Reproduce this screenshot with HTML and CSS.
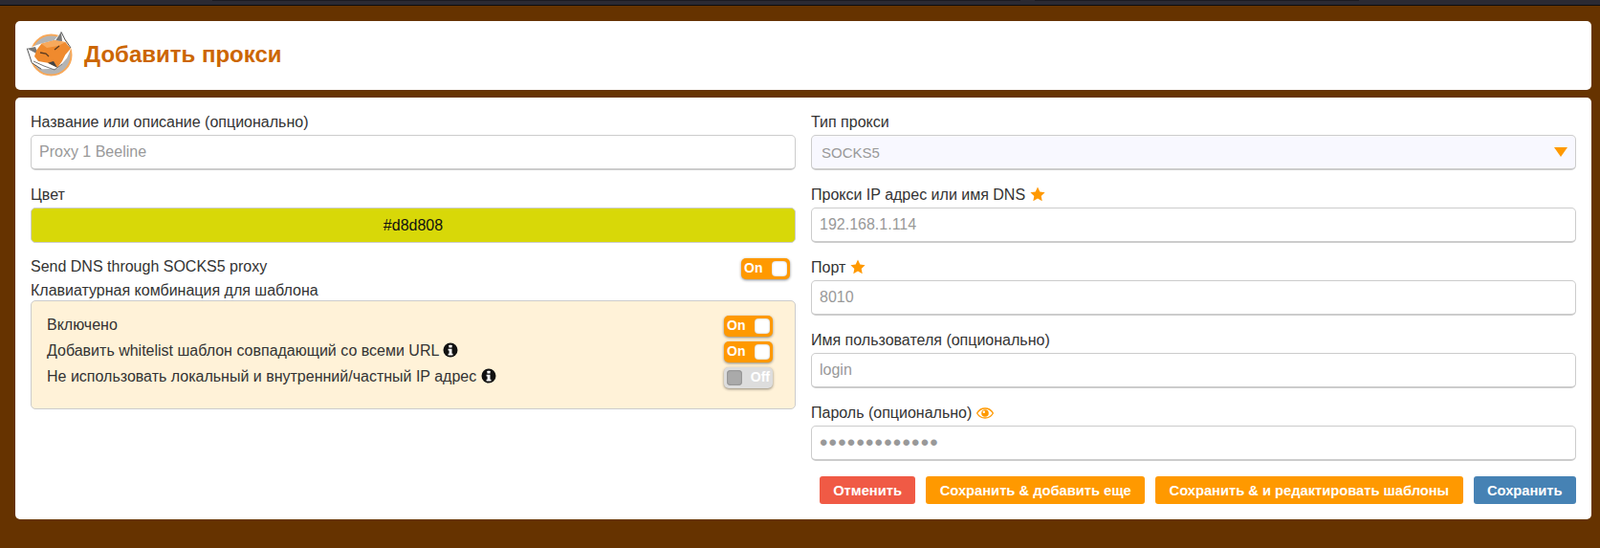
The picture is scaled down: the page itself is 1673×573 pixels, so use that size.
FILE: index.html
```html
<!DOCTYPE html>
<html lang="ru">
<head>
    <meta charset="UTF-8">
    <title>Добавить прокси</title>
    <link rel="stylesheet" href="styles.css">
</head>
<body>
    <div class="browser-bar">
        <div class="browser-tab tab-wide"></div>
        <div class="browser-tab tab-narrow"></div>
    </div>
    <div class="page">
        <header class="card header-card">
            <svg class="logo" width="52" height="52" viewBox="0 0 52 52">
                <circle cx="26.500" cy="26.500" r="21" fill="#b4b4b4" stroke="#f9a857" stroke-width="2"/>
                <path d="M1.300 19.700 L16 14.500 L29.700 11.300 L37 2.300 L41.300 11 L48 18 L43 29.700 L33 40.700 L16.300 41.300 L6.300 34.700 Z" fill="#fff"/>
                <path d="M37 2.300 L41.300 11 L47 19 M1.300 19.700 L6.300 34.700 L16.300 41.300" fill="none" stroke="#555" stroke-width="1"/>
                <path d="M1.300 19.700 L10 18 L13 26 Z M37 2.300 L31 11.500 L38 12 Z" fill="#777"/>
                <path d="M16.300 14.700 L29.700 11.300 L41.300 13 L47 19.700 L41.300 26.300 L38 33 L33 39.700 L23 34.700 L13 33 L9 28 L11.300 21.300 Z" fill="#ef8a2e"/>
                <path d="M16.300 14.700 L29.700 11.300 L41.300 13 L34 17 L22 19 Z" fill="#f7a95c"/>
                <path d="M15 24 L21 25 L24 28 M30 21 L35 17" fill="none" stroke="#5a3a20" stroke-width="1.300"/>
                <path d="M23 34.700 L33 39.700 L29 33 Z" fill="#444"/>
                <path d="M8 33 L19 38 L30 42 L38 36" fill="none" stroke="#777" stroke-width="1"/>
            </svg>
            <h1 class="title">Добавить прокси</h1>
        </header>
        <main class="card form-card">
            <div class="column">
                <div class="field">
                    <label class="field-label">Название или описание (опционально)</label>
                    <input class="text-input" type="text" placeholder="Proxy 1 Beeline">
                </div>
                <div class="field">
                    <label class="field-label">Цвет</label>
                    <div class="color-box">#d8d808</div>
                </div>
                <div class="switch-row dns-row">
                    <span>Send DNS through SOCKS5 proxy</span>
                    <span class="toggle toggle-on"><b>On</b><i></i></span>
                </div>
                <div class="pattern-label">Клавиатурная комбинация для шаблона</div>
                <div class="pattern-box">
                    <div class="switch-row">
                        <span>Включено</span>
                        <span class="toggle toggle-on"><b>On</b><i></i></span>
                    </div>
                    <div class="switch-row">
                        <span>Добавить whitelist шаблон совпадающий со всеми URL
                            <svg class="icon" width="16" height="16" viewBox="0 0 16 16"><circle cx="8" cy="8" r="7.500" fill="#111"/><rect x="6.400" y="2.800" width="3.200" height="2.800" rx=".5" fill="#fff"/><path d="M5.600 6.800h3.900v5h1v1.600H5.600v-1.600h1v-3.400h-1z" fill="#fff"/></svg>
                        </span>
                        <span class="toggle toggle-on"><b>On</b><i></i></span>
                    </div>
                    <div class="switch-row">
                        <span>Не использовать локальный и внутренний/частный IP адрес
                            <svg class="icon" width="16" height="16" viewBox="0 0 16 16"><circle cx="8" cy="8" r="7.500" fill="#111"/><rect x="6.400" y="2.800" width="3.200" height="2.800" rx=".5" fill="#fff"/><path d="M5.600 6.800h3.900v5h1v1.600H5.600v-1.600h1v-3.400h-1z" fill="#fff"/></svg>
                        </span>
                        <span class="toggle toggle-off"><i></i><b>Off</b></span>
                    </div>
                </div>
            </div>
            <div class="column">
                <div class="field">
                    <label class="field-label">Тип прокси</label>
                    <div class="select-wrap">
                        <select class="select-input"><option>SOCKS5</option></select>
                    </div>
                </div>
                <div class="field">
                    <label class="field-label">Прокси IP адрес или имя DNS
                        <svg class="icon" width="16" height="16" viewBox="0 0 16 16"><path d="M8 .6l2.300 4.900 5.300.7-3.900 3.700 1 5.300L8 12.600l-4.700 2.600 1-5.300L.4 6.200l5.300-.7z" fill="#f90"/></svg>
                    </label>
                    <input class="text-input" type="text" placeholder="192.168.1.114">
                </div>
                <div class="field">
                    <label class="field-label">Порт
                        <svg class="icon" width="16" height="16" viewBox="0 0 16 16"><path d="M8 .6l2.300 4.900 5.300.7-3.900 3.700 1 5.300L8 12.600l-4.700 2.600 1-5.300L.4 6.200l5.300-.7z" fill="#f90"/></svg>
                    </label>
                    <input class="text-input" type="text" placeholder="8010">
                </div>
                <div class="field">
                    <label class="field-label">Имя пользователя (опционально)</label>
                    <input class="text-input" type="text" placeholder="login">
                </div>
                <div class="field">
                    <label class="field-label">Пароль (опционально)
                        <svg class="icon" width="18" height="14" viewBox="0 0 18 14"><path d="M9 2C5.200 2 2.200 4.200.6 7c1.600 2.800 4.600 5 8.400 5s6.800-2.200 8.400-5C15.800 4.200 12.800 2 9 2z" fill="none" stroke="#f90" stroke-width="1.300"/><circle cx="9" cy="7" r="3.800" fill="#f90"/><circle cx="7.800" cy="5.800" r="1.200" fill="#fff"/></svg>
                    </label>
                    <input class="text-input password-input" type="password" value="1234567890123">
                </div>
                <div class="button-row">
                    <button class="btn btn-cancel">Отменить</button>
                    <button class="btn btn-orange">Сохранить &amp; добавить еще</button>
                    <button class="btn btn-orange">Сохранить &amp; и редактировать шаблоны</button>
                    <button class="btn btn-save">Сохранить</button>
                </div>
            </div>
        </main>
    </div>
</body>
</html>
```

FILE: styles.css
```css
* {
    box-sizing: border-box;
}
body {
    margin: 0;
    height: 573px;
    overflow: hidden;
    background-color: #663300;
    font-family: "Liberation Sans", Arial, sans-serif;
    font-size: 16px;
    color: #333;
}
.browser-bar {
    display: flex;
    gap: 15px;
    height: 6px;
    padding-left: 222px;
    background-color: #2b2a33;
    border-bottom: 1px solid #0c0c0d;
}
.browser-tab {
    height: 1px;
    background-color: #1c1b22;
}
.tab-wide {
    width: 845px;
}
.tab-narrow {
    width: 339px;
}
.page {
    padding: 16px 9px 0 16px;
}
.card {
    background-color: #fff;
    border-radius: 5px;
}
.header-card {
    display: flex;
    align-items: center;
    height: 72px;
    padding: 0 0 2px 11px;
    margin-bottom: 8px;
}
.logo {
    flex: none;
    margin-right: 9px;
}
.title {
    margin: 0;
    font-size: 24px;
    font-weight: bold;
    color: #cc6600;
}
.form-card {
    display: grid;
    grid-template-columns: 1fr 1fr;
    column-gap: 16px;
    height: 441px;
    padding: 15px 16px 0 16px;
}
.field {
    margin-bottom: 15px;
}
.field-label {
    display: block;
    height: 24px;
    line-height: 21px;
}
.icon {
    vertical-align: -2px;
}
.text-input,
.select-input {
    display: block;
    width: 100%;
    height: 37px;
    padding: 0 8px;
    font-family: inherit;
    font-size: 16px;
    color: #999;
    background-color: #fff;
    border: 2px solid #ccc;
    border-width: 1px 1px 2px 1px;
    border-radius: 5px;
    outline: none;
}
.text-input::placeholder {
    color: #999;
    opacity: 1;
}
.password-input {
    font-size: 24px;
    letter-spacing: 1.200px;
}
.select-input {
    appearance: none;
    font-size: 15px;
    padding-left: 10px;
    background-color: #f8f8ff;
}
.select-wrap {
    position: relative;
}
.select-wrap::after {
    content: "";
    position: absolute;
    top: 13px;
    right: 9px;
    border-style: solid;
    border-width: 10px 7px 0;
    border-color: #f90 transparent transparent;
}
.color-box {
    height: 37px;
    line-height: 36px;
    text-align: center;
    color: #111;
    background-color: #d8d808;
    border: 1px solid #ccc;
    border-radius: 5px;
}
.switch-row {
    display: flex;
    justify-content: space-between;
    align-items: flex-start;
    height: 22px;
    margin-bottom: 5px;
    line-height: 20px;
}
.switch-row .toggle {
    margin-top: -1px;
}
.switch-row span:first-child {
    margin-top: -1px;
}
.dns-row {
    padding-right: 6px;
    margin-bottom: 0;
}
.dns-row .toggle {
    margin-top: 1px;
}
.dns-row span:first-child {
    margin-top: 0;
}
.pattern-label {
    height: 23px;
    line-height: 26px;
}
.pattern-box {
    height: 114px;
    padding: 16px 23px 0 16px;
    background-color: #fff2d8;
    border: 1px solid #ccc;
    border-radius: 5px;
}
.toggle {
    display: flex;
    align-items: center;
    justify-content: space-between;
    flex: none;
    width: 51px;
    height: 22px;
    padding: 0 3px;
    font-size: 14px;
    color: #fff;
    border-radius: 5px;
    box-shadow: 0 1px 3px rgba(0, 0, 0, 0.45);
}
.toggle b {
    padding-bottom: 2px;
    line-height: 16px;
}
.toggle i {
    display: block;
    width: 16px;
    height: 16px;
    border-radius: 4px;
}
.toggle-on {
    background-color: #f90;
}
.toggle-on i {
    background-color: #fff;
    box-shadow: inset 0 0 2px rgba(0, 0, 0, 0.3);
}
.toggle-off {
    background-color: #ddd;
}
.toggle-off i {
    background-color: #aaa;
    box-shadow: inset 0 0 2px rgba(0, 0, 0, 0.4);
}
.button-row {
    display: flex;
    justify-content: flex-end;
    gap: 11px;
    margin-top: 16px;
}
.btn {
    height: 29px;
    padding: 0 14.400px;
    font-family: inherit;
    font-size: 14.700px;
    font-weight: bold;
    color: #fff;
    border: 0;
    border-radius: 3px;
}
.btn-cancel {
    background-color: #f05a45;
}
.btn-orange {
    background-color: #f90;
}
.btn-save {
    background-color: #4682b4;
}
```
